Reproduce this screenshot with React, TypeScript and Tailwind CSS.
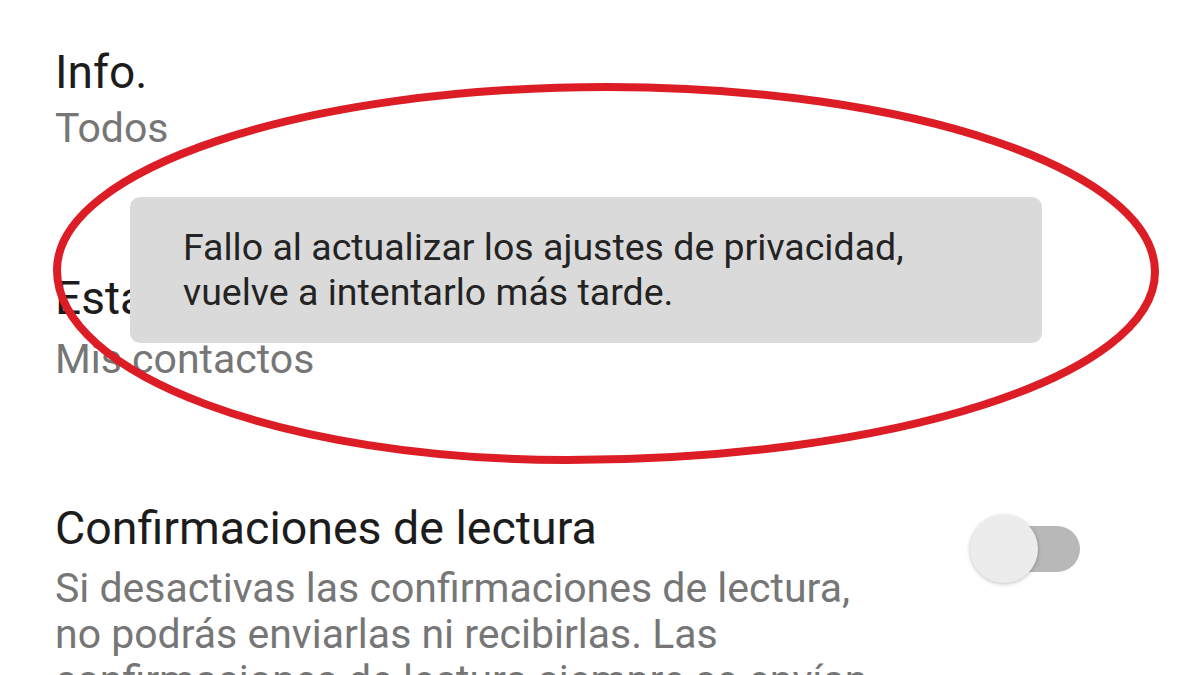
import React from 'react';

const font = { fontFamily: 'Roboto, "Noto Sans", sans-serif' };

const Ajuste = ({ title, value, gap = 0 }: { title: string; value: string; gap?: number }) => (
  <div>
    <div className="text-[46px] leading-[56px] text-[#1c1c1c]">{title}</div>
    <div className="text-[41px] leading-[56px] text-[#767676]" style={{ marginTop: gap }}>
      {value}
    </div>
  </div>
);

export default function App() {
  return (
    <div className="relative w-[1200px] h-[675px] overflow-hidden bg-white" style={font}>
      <div className="flex flex-col px-[55px] pt-[44px]">
        <Ajuste title="Info." value="Todos" />
        <div className="mt-[114px]">
          <Ajuste title="Estado" value="Mis contactos" gap={5} />
        </div>
        <div className="mt-[113px] flex items-start justify-between">
          <div className="w-[880px]">
            <div className="text-[46.5px] leading-[56px] text-[#1c1c1c]">Confirmaciones de lectura</div>
            <p className="mt-[9px] text-[41px] leading-[46px] text-[#767676]">
              Si desactivas las confirmaciones de lectura,
              <br />
              no podrás enviarlas ni recibirlas. Las
              <br />
              confirmaciones de lectura siempre se envían
            </p>
          </div>
          {/* interruptor apagado */}
          <div className="relative mt-[14px] mr-[65px] w-[110px] h-[70px] flex items-center">
            <div className="absolute right-0 w-[90px] h-[46px] rounded-full bg-[#b8b8b8]" />
            <div className="absolute left-0 w-[68px] h-[68px] rounded-full bg-[#ececec] shadow-[0_1px_4px_rgba(0,0,0,0.25)]" />
          </div>
        </div>
      </div>

      {/* toast */}
      <div className="absolute left-[130px] top-[197px] w-[912px] h-[146px] rounded-[10px] bg-[#dadada] pl-[53px] pt-[28px]">
        <p className="text-[37.5px] leading-[45px] text-[#232323]">
          Fallo al actualizar los ajustes de privacidad,
          <br />
          vuelve a intentarlo más tarde.
        </p>
      </div>

      {/* marca roja a mano */}
      <svg className="absolute inset-0 pointer-events-none" width="1200" height="675" viewBox="0 0 1200 675">
        <path
          d="M607 87 C910 87 1155 170 1155 272 C1155 376 892 460 567 460 C285 460 57 375 57 270 C57 169 303 87 607 87 Z"
          fill="none"
          stroke="#dc1d25"
          strokeWidth="8"
        />
      </svg>
    </div>
  );
}
